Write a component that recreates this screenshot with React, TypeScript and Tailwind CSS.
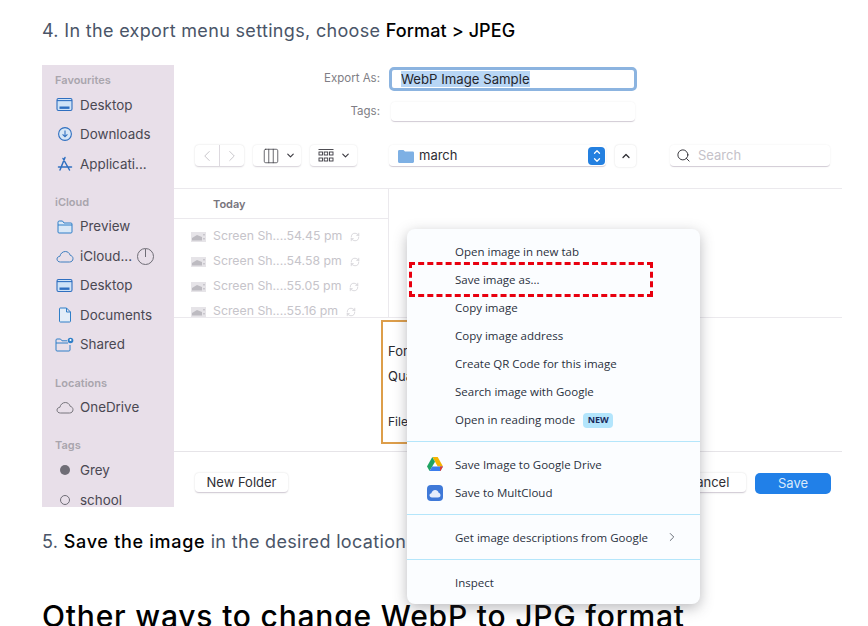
import React from "react";
import { ChevronDown, ChevronLeft, ChevronRight, ChevronUp, Search, RefreshCw, Columns3 } from "lucide-react";

const ui = "font-['Inter',sans-serif]";

function DesktopIcon() {
  return (
    <svg width="17" height="15" viewBox="0 0 17 15" fill="none" stroke="#2f6fc0" strokeWidth="1.1">
      <rect x="1" y="1.5" width="15" height="12" rx="1.5" fill="#cfe3f7" />
      <path d="M1 3.6h15" />
      <rect x="3.5" y="9.5" width="10" height="2.4" fill="#2f6fc0" stroke="none" />
    </svg>
  );
}

function DownloadIcon() {
  return (
    <svg width="16" height="16" viewBox="0 0 16 16" fill="#d6e6f6" stroke="#2f6fc0" strokeWidth="1.1">
      <circle cx="8" cy="8" r="6.4" />
      <path d="M8 4.5v6.2M5.6 8.4 8 10.8l2.4-2.4" fill="none" />
    </svg>
  );
}

function AppsIcon() {
  return (
    <svg width="16" height="16" viewBox="0 0 16 16" fill="none" stroke="#2f6fc0" strokeWidth="1.5" strokeLinecap="round">
      <path d="M8 1.5 3 14M6 2.5 12.5 14M1.5 11h13" />
    </svg>
  );
}

function FolderIcon() {
  return (
    <svg width="16" height="14" viewBox="0 0 16 14" fill="#d9e8f7" stroke="#2f7fc8" strokeWidth="1">
      <path d="M1 3V2.2C1 1.5 1.5 1 2.2 1H5.5L7 3H14C14.6 3 15 3.4 15 4V12C15 12.6 14.6 13 14 13H2C1.4 13 1 12.6 1 12V3ZM1 5H15" />
    </svg>
  );
}

function CloudIcon({ color = "#3f7fc0" }: { color?: string }) {
  return (
    <svg width="18" height="13" viewBox="0 0 18 13" fill="none" stroke={color} strokeWidth="1">
      <path d="M4.5 12C2.5 12 1 10.8 1 9.1 1 7.5 2.3 6.4 3.9 6.3 4.4 3.6 6.6 1.5 9.3 1.5 11.7 1.5 13.6 3.1 14.2 5.3 15.9 5.7 17 7 17 8.700 17 10.6 15.5 12 13.5 12H4.5Z" />
    </svg>
  );
}

function DocIcon() {
  return (
    <svg width="14" height="16" viewBox="0 0 14 16" fill="#e3edf8" stroke="#2f7fc8" strokeWidth="1">
      <path d="M2 1h6.5L12.5 5v9.2c0 .5-.3.8-.8.8H2.300c-.5 0-.8-.3-.8-.8V1.800C1.5 1.300 1.700 1 2 1ZM8.500 1v4h4" />
    </svg>
  );
}

function SharedIcon() {
  return (
    <svg width="19" height="15" viewBox="0 0 19 15" fill="#cfe6fa" stroke="#2f7fc8" strokeWidth="1">
      <path d="M1 4V3C1 2.4 1.4 2 2 2H5.5L7 3.8H12M1 6H13M1 4V13C1 13.6 1.4 14 2 14H14C14.6 14 15 13.6 15 13V8" fill="none" />
      <circle cx="15.5" cy="3.5" r="2.8" fill="#2f7fc8" stroke="none" />
      <circle cx="15.5" cy="3" r="1" fill="#ffffff" stroke="none" />
    </svg>
  );
}

function GreyDot() {
  return <div className="w-[10px] h-[10px] rounded-full bg-[#6f6d76] mx-[3px]" />;
}

function OpenDot() {
  return <div className="w-[10px] h-[10px] rounded-full border border-[#6f6d76] mx-[3px]" />;
}

function Thumb() {
  return (
    <svg width="15" height="10" viewBox="0 0 15 10" className="mr-[7px] shrink-0">
      <rect width="15" height="10" fill="#e6e4e8" />
      <path d="M1 8.500h10V5L6 3 1 6z" fill="#bdbbc1" />
      <rect x="12" y="2" width="2" height="1.500" fill="#c9c7cd" />
      <rect x="12" y="6" width="2" height="1.500" fill="#c9c7cd" />
    </svg>
  );
}

const sidebar = [
  {
    title: "Favourites",
    items: [
      { label: "Desktop", icon: <DesktopIcon /> },
      { label: "Downloads", icon: <DownloadIcon /> },
      { label: "Applicati...", icon: <AppsIcon /> },
    ],
  },
  {
    title: "iCloud",
    items: [
      { label: "Preview", icon: <FolderIcon /> },
      { label: "iCloud...", icon: <CloudIcon />, progress: true },
      { label: "Desktop", icon: <DesktopIcon /> },
      { label: "Documents", icon: <DocIcon /> },
      { label: "Shared", icon: <SharedIcon /> },
    ],
  },
  {
    title: "Locations",
    items: [{ label: "OneDrive", icon: <CloudIcon color="#77757c" /> }],
  },
  {
    title: "Tags",
    items: [
      { label: "Grey", icon: <GreyDot /> },
      { label: "school", icon: <OpenDot /> },
    ],
  },
];

const files = ["Screen Sh....54.45 pm", "Screen Sh....54.58 pm", "Screen Sh....55.05 pm", "Screen Sh....55.16 pm"];

const menuGroups = [
  [
    { label: "Open image in new tab" },
    { label: "Save image as..." },
    { label: "Copy image" },
    { label: "Copy image address" },
    { label: "Create QR Code for this image" },
    { label: "Search image with Google" },
    { label: "Open in reading mode", badge: "NEW" },
  ],
  [
    { label: "Save Image to Google Drive", icon: "drive" },
    { label: "Save to MultCloud", icon: "cloud" },
  ],
  [{ label: "Get image descriptions from Google", arrow: true }],
  [{ label: "Inspect" }],
];

function DriveIcon() {
  return (
    <svg width="16" height="14" viewBox="0 0 16 14">
      <path d="M10.7 0 16 9.5h-5.300L5.500 0z" fill="#f5b400" />
      <path d="M5.300 0 0 9.500 2.600 14 8 4.700z" fill="#1fa463" />
      <path d="M2.600 14h10.800L16 9.500H5.200z" fill="#3b7ded" />
      <path d="M13 14h.4L16 9.500h-3z" fill="#e53a2f" />
    </svg>
  );
}

function MultCloudIcon() {
  return (
    <div className="w-4 h-4 rounded-[4px] bg-[#3f79d8] flex items-center justify-center">
      <svg width="12" height="9" viewBox="0 0 12 9" fill="#e6eefb">
        <path d="M3 8.500C1.400 8.500.5 7.500.5 6.300.5 5.200 1.300 4.400 2.400 4.200 2.800 2.300 4.300 1 6.100 1 7.800 1 9.200 2.100 9.600 3.700 10.800 4 11.500 5 11.500 6.200 11.500 7.500 10.500 8.500 9 8.500H3Z" />
      </svg>
    </div>
  );
}

function ContextMenu() {
  return (
    <div className="absolute left-[407px] top-[229px] w-[293px] h-[375px] rounded-[8px] bg-[#fbfdff] shadow-[0_4px_14px_rgba(60,60,70,0.35)] font-['Open_Sans',sans-serif] text-[11.5px] text-[#2a3140] flex flex-col">
      {menuGroups.map((group, i) => (
        <div key={i} className={i === 0 ? "pt-[9px] pb-[7px]" : "border-t border-[#b4e6fb] pt-[9px] pb-[7px]"}>
          {group.map((item: any) => (
            <div key={item.label} className="h-[28px] flex items-center relative pl-[48px]">
              {item.icon && (
                <div className="absolute left-[20px] top-[6px]">
                  {item.icon === "drive" ? <DriveIcon /> : <MultCloudIcon />}
                </div>
              )}
              <span>{item.label}</span>
              {item.badge && (
                <span className="ml-[8px] h-[15px] w-[30px] justify-center rounded-[4px] bg-[#b3e5fc] text-[#1a2a5c] text-[9px] font-bold flex items-center">
                  {item.badge}
                </span>
              )}
              {item.arrow && <ChevronRight className="absolute left-[258px] top-[6px] text-[#555b66]" size={14} strokeWidth={1.5} />}
            </div>
          ))}
        </div>
      ))}
      <div className="absolute left-[2px] top-[33px] w-[244px] h-[35px] border-[3px] border-dashed border-[#e8000f]" />
    </div>
  );
}

function SaveDialog() {
  return (
    <div className={`flex w-[800px] h-[442px] overflow-hidden mt-[22px] ${ui}`}>
      <aside className="w-[132px] shrink-0 bg-[#e8dfe9] pl-[13px] pt-[7px] flex flex-col gap-[15.3px]">
        {sidebar.map((section) => (
          <div key={section.title}>
            <div className="text-[11px] font-semibold text-[#a9a5ad] h-[16px] leading-[16px]">{section.title}</div>
            <div className="pt-[2px]">
              {section.items.map((item: any) => (
                <div key={item.label + section.title} className="h-[29.5px] flex items-center text-[13.4px] text-[#4a4852]">
                  <div className="w-[19px] flex justify-center mr-[6px] shrink-0">{item.icon}</div>
                  <span className="whitespace-nowrap">{item.label}</span>
                  {item.progress && (
                    <div className="w-[17px] h-[17px] rounded-full border border-[#6f6d76] ml-[5px] flex justify-center">
                      <div className="w-px h-[8px] bg-[#6f6d76]" />
                    </div>
                  )}
                </div>
              ))}
            </div>
          </div>
        ))}
      </aside>

      <main className="flex-1 bg-white flex flex-col">
        <div className="h-[123px] shrink-0 flex flex-col">
          <div className="flex items-center h-[26px] mt-[1px]">
            <div className="w-[206px] text-right text-[11.5px] text-[#807e85]">Export As:</div>
            <div className="ml-[9px] w-[248px] h-[24px] rounded-[5px] border-[3px] border-[#8cb4e0] flex items-center pl-[9px] text-[13.2px] text-[#24242a]">
              <span className="bg-[#b8d6f5] leading-[16px]">WebP Image Sample</span>
            </div>
          </div>
          <div className="flex items-center h-[20px] mt-[10px]">
            <div className="w-[206px] text-right text-[11.5px] text-[#807e85]">Tags:</div>
            <div className="ml-[11px] w-[244px] h-[20px] rounded-[4px] border-b border-[#d5cfd8] shadow-[0_0_2px_rgba(0,0,0,0.08)]" />
          </div>
          <div className="flex items-center h-[22px] mt-[23px] pl-[21px]">
            <div className="flex w-[49px] h-[22px] rounded-[4px] border-b border-[#ddd9df] shadow-[0_0_2px_rgba(0,0,0,0.15)]">
              <div className="w-[25px] flex items-center justify-center border-r border-[#ddd9df]">
                <ChevronLeft size={18} strokeWidth={1} className="text-[#b5b3ba]" />
              </div>
              <div className="flex-1 flex items-center justify-center">
                <ChevronRight size={18} strokeWidth={1} className="text-[#b5b3ba]" />
              </div>
            </div>
            <div className="ml-[9px] w-[48px] h-[22px] rounded-[4px] border-b border-[#ddd9df] shadow-[0_0_2px_rgba(0,0,0,0.12)] flex items-center pl-[9px] gap-[5px]">
              <Columns3 size={18} strokeWidth={1} className="text-[#3a3940]" />
              <ChevronDown size={11} strokeWidth={2.5} className="text-[#3a3940]" />
            </div>
            <div className="ml-[9px] w-[47px] h-[22px] rounded-[4px] border-b border-[#ddd9df] shadow-[0_0_2px_rgba(0,0,0,0.12)] flex items-center pl-[8px] gap-[6px]">
              <svg width="16" height="16" viewBox="0 0 16 16" fill="none" stroke="#3a3940" strokeWidth="0.9">
                <path d="M.5 1.5h15" />
                <rect x="1" y="4" width="3.5" height="3" />
                <rect x="6.2" y="4" width="3.5" height="3" />
                <rect x="11.5" y="4" width="3.5" height="3" />
                <rect x="1" y="10" width="3.5" height="3" />
                <rect x="6.2" y="10" width="3.5" height="3" />
                <rect x="11.5" y="10" width="3.5" height="3" />
              </svg>
              <ChevronDown size={11} strokeWidth={2.5} className="text-[#3a3940]" />
            </div>
            <div className="ml-[32px] w-[217px] h-[22px] rounded-[4px] border-b border-[#d5cfd8] shadow-[0_0_2px_rgba(0,0,0,0.08)] flex items-center pl-[9px] relative text-[13px] text-[#2e2d33]">
              <svg width="16" height="14" viewBox="0 0 16 14" className="mr-[5px]">
                <path d="M0 2.5C0 1.7.5 1 1.3 1H5.5L7 2.5H14.5C15.3 2.5 16 3 16 3.8V12.5C16 13.3 15.3 14 14.5 14H1.5C.7 14 0 13.3 0 12.5V2.5Z" fill="#7eb0e4" />
              </svg>
              march
              <div className="absolute right-[1px] top-[2px] w-[17px] h-[18px] rounded-[4px] bg-[#2480e0] flex flex-col items-center justify-center">
                <ChevronUp size={10} strokeWidth={3} className="text-white -mb-[2px]" />
                <ChevronDown size={10} strokeWidth={3} className="text-white" />
              </div>
            </div>
            <div className="ml-[9px] w-[21px] h-[22px] rounded-[4px] shadow-[0_0_2px_rgba(0,0,0,0.15)] flex items-center justify-center">
              <ChevronUp size={12} strokeWidth={2.5} className="text-[#2e2d33]" />
            </div>
            <div className="ml-[34px] w-[160px] h-[22px] rounded-[4px] border-b border-[#d5cfd8] shadow-[0_0_2px_rgba(0,0,0,0.08)] flex items-center pl-[6px] gap-[7px] text-[13px] text-[#c5c2c9]">
              <Search size={15} strokeWidth={1.5} className="text-[#2e2d33]" />
              Search
            </div>
          </div>
        </div>

        <div className="h-[130px] shrink-0 border-t border-b border-[#ebe9ed] flex">
          <div className="w-[215px] border-r border-[#ebe9ed] shrink-0">
            <div className="h-[30px] border-b border-[#ebe9ed] pl-[39px] pt-[1px] flex items-center text-[11px] font-semibold text-[#77757c]">Today</div>
            <div className="pt-[5px]">
              {files.map((name) => (
                <div key={name} className="h-[25px] flex items-center pl-[17px] text-[12.3px] text-[#c6c4ca]">
                  <Thumb />
                  <span className="whitespace-nowrap">{name}</span>
                  <RefreshCw size={10} strokeWidth={1.5} className="ml-[8px]" />
                </div>
              ))}
            </div>
          </div>
        </div>

        <div className="h-[134px] shrink-0 border-b border-[#e6e4e8] pl-[207px] pt-[2px]">
          <div className="h-[124px] w-[300px] border-[2px] border-r-0 border-[#dd9e4a] pl-[5px] text-[13px] text-[#2a2a30]">
            <div className="pt-[21px] leading-[16px]">Format:</div>
            <div className="pt-[9px] leading-[16px]">Quality:</div>
            <div className="pt-[30px] leading-[16px] text-[12px]">File Size:</div>
          </div>
        </div>

        <div className="flex items-start pt-[21px] pl-[21px] text-[13px] relative">
          <div className="w-[93px] h-[20px] rounded-[4px] border-b border-[#d5cfd8] shadow-[0_0_2px_rgba(0,0,0,0.15)] flex items-center justify-center text-[#2e2d33]">New Folder</div>
          <div className="absolute left-[496px] top-[21px] w-[76px] h-[20px] rounded-[4px] border-b border-[#d5cfd8] shadow-[0_0_2px_rgba(0,0,0,0.15)] flex items-center justify-center text-[#2e2d33]">Cancel</div>
          <div className="absolute left-[581px] top-[21px] w-[76px] h-[21px] rounded-[5px] bg-[#2180e8] flex items-center justify-center text-[#d8e9fb]">Save</div>
        </div>
      </main>
    </div>
  );
}

export default function App() {
  return (
    <div className="relative w-[868px] h-[626px] overflow-hidden bg-white font-['Inter',sans-serif]">
      <div className="pl-[42px] pt-[18px]">
        <p className="text-[18px] leading-[25px] tracking-[0.33px] text-[#4a5568] whitespace-nowrap">
          4. In the export menu settings, choose <span className="font-medium text-black tracking-[0.1px]">Format &gt; JPEG</span>
        </p>
        <SaveDialog />
        <p className="mt-[22px] text-[18px] leading-[25px] tracking-[0.33px] text-[#4a5568] whitespace-nowrap">
          5. <span className="font-medium text-black tracking-[0.7px]">Save the image</span> in the desired location.
        </p>
        <h2 className="mt-[42px] text-[30px] leading-[40px] tracking-[0.8px] font-medium text-black whitespace-nowrap">
          Other ways to change WebP to JPG format
        </h2>
      </div>
      <ContextMenu />
    </div>
  );
}
